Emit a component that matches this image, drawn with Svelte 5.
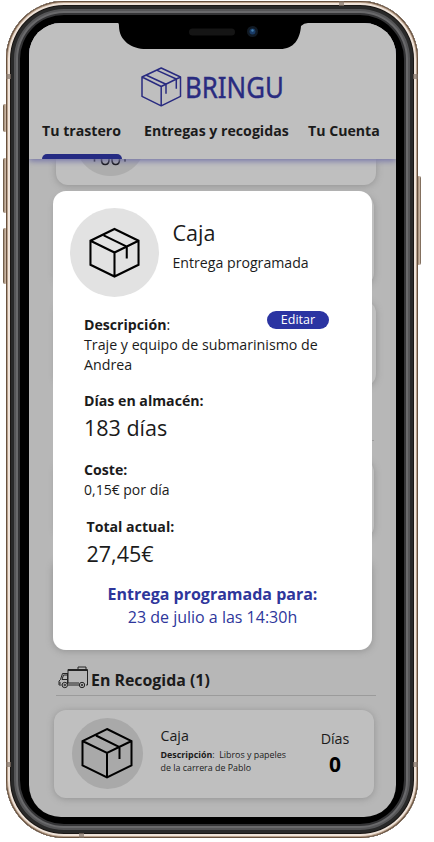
<script>
  const tabs = ['Tu trastero', 'Entregas y recogidas', 'Tu Cuenta'];
</script>

{#snippet box(size, stroke)}
  <svg width={size} height={size} viewBox="0 0 52 52" fill="none" stroke="currentColor" stroke-width={stroke}>
    <path d="M26 2 50.500 14V38.500L26 50.500 1.500 38.500V14ZM1.500 14 26 26 50.500 14M26 26V50.500M15 8.500 38.500 20V32" />
  </svg>
{/snippet}

<div class="phone">
  <i class="key mute"></i>
  <i class="key up"></i>
  <i class="key down"></i>
  <i class="key power"></i>
  <i class="band a"></i><i class="band b"></i><i class="band c"></i><i class="band d"></i><i class="band e"></i><i class="band f"></i>
  <div class="body">
    <div class="screen">
      <header>
        <div class="logo">
          <svg width="42" height="40" viewBox="0 0 42 40" fill="none" stroke="#292b80" stroke-width="1.5" stroke-linejoin="round">
            <path d="M20.200 1 39.500 10V29.300L20.200 38.800 1 29.300V10ZM1 10 20.200 19.500 39.500 10M20.200 19.500V38.800M4.900 8 25 17.300V26.700M15.600 3.100 35.300 12V21.700" />
          </svg>
          <span>BRINGU</span>
        </div>
        <nav>
          {#each tabs as tab, i}
            <a class="t{i}" class:active={i === 0}>{tab}</a>
          {/each}
        </nav>
      </header>
      <main>
        <div class="card first">
          <div class="peek">
            <svg width="34" height="7" viewBox="0 0 34 7" fill="none" stroke="#111" stroke-width="1.600"><path d="M1.500 0V2.500M32 0V2.500M8.500 0V1Q8.500 5.500 12.200 5.500T16 1V0M19 0V1Q19 5.500 22.700 5.500T26.500 1V0" /></svg>
          </div>
        </div>
        <div class="card second"></div>
        <div class="card third"></div>
        <div class="rule short"></div>
        <div class="card fourth"></div>
        <div class="card fifth"></div>
        <h2>
          <svg width="31" height="23" viewBox="0 0 31 23" fill="none" stroke="#242424" stroke-width="1">
            <path d="M10 17V3.500H29.500V19H28M22 19H10M10 4.500H29M20 3V1H28V3M9.500 7.500H4.500L2.500 13.500 1 15V19H3.500M9.500 9H5.500L4 13.500H9.500M9.500 7V18M1 17H3M10 17H21" />
            <circle cx="6.800" cy="19" r="2.700" /><circle cx="24" cy="19" r="2.700" />
            <circle cx="6.800" cy="19" r=".8" /><circle cx="24" cy="19" r=".8" />
          </svg>
          <span>En Recogida (1)</span>
        </h2>
        <div class="rule"></div>
        <article class="card item">
          <div class="circle small">{@render box(52, 2)}</div>
          <div class="info">
            <h3>Caja</h3>
            <p><b>Descripción</b>:&nbsp; Libros y papeles<br />de la carrera de Pablo</p>
          </div>
          <div class="days"><span>Días</span><b>0</b></div>
        </article>
      </main>
    </div>
  </div>
  <div class="notch">
    <svg width="190" height="28" viewBox="0 0 190 28">
      <path d="M0 0H190V1Q186 1 183 4C182 17 176 27 162 27H28C14 27 1 19 1 4Q1 1 0 1Z" fill="#000" />
      <rect x="74" y="6.500" width="46" height="7" rx="3.500" fill="#151515" />
      <circle cx="137.500" cy="9.500" r="5.500" fill="#111a24" /><circle cx="137.500" cy="9.500" r="3" fill="#193b66" /><circle cx="137.500" cy="8.500" r="1.200" fill="#427eae" />
    </svg>
  </div>

  <section class="modal">
    <div class="head">
      <div class="circle">{@render box(51, 2.1)}</div>
      <div class="title">
        <h1>Caja</h1>
        <p>Entrega programada</p>
      </div>
    </div>
    <div class="block desc">
      <div class="line"><span><b>Descripción</b>:</span><button>Editar</button></div>
      <p>Traje y equipo de submarinismo de<br />Andrea</p>
    </div>
    <div class="block">
      <b>Días en almacén:</b>
      <p class="big">183 días</p>
    </div>
    <div class="block cost">
      <b>Coste:</b>
      <p>0,15€ por día</p>
    </div>
    <div class="block total">
      <b>Total actual:</b>
      <p class="big">27,45€</p>
    </div>
    <footer>
      <b>Entrega programada para:</b>
      <p>23 de julio a las 14:30h</p>
    </footer>
  </section>
</div>

<style>
  :global(body) { background: #fff; }
  * { box-sizing: border-box; }
  h1, h2, h3, p { margin: 0; font-weight: 400; }
  svg { display: block; flex: none; }
  .phone {
    position: relative;
    width: 412px;
    height: 837px;
    margin-left: 6px;
    margin-top: 1px;
    font-family: "Open Sans", "Noto Sans", sans-serif;
    color: #1b1b1b;
    white-space: nowrap;
  }
  .body {
    position: relative;
    height: 100%;
    padding: 22px 22px 20px 22.5px;
    border-radius: 58px;
    background: #000;
    box-shadow: inset 0 0 0 1px #67513f, inset 0 0 0 2px #b9a18c, inset 0 0 0 4px #efe3d9, inset 0 0 0 5px #191614,
      inset 0 0 0 8px #292929, inset 0 0 0 10px #555557, inset 0 0 0 12px #69696b, inset 0 0 0 14px #343436;
  }
  .key { position: absolute; width: 4px; background: linear-gradient(90deg, #554330, #b19b86 40%, #cab5a3 65%, #5b4939); border-radius: 2px; }
  .mute { left: -3px; top: 103px; height: 28px; }
  .up { left: -3px; top: 157px; height: 55px; }
  .down { left: -3px; top: 227px; height: 56px; }
  .power { right: -3px; top: 175px; height: 89px; width: 4px; }
  .band { position: absolute; z-index: 2; width: 5px; height: 5px; background: #85756a; opacity: .7; }
  .a { left: 0; top: 73px; }
  .b { right: 0; top: 73px; }
  .c { left: 0; top: 761px; }
  .d { right: 0; top: 761px; }
  .e { left: 333px; top: 0; }
  .f { left: 73px; bottom: 0; }
  .screen { height: 794px; overflow: hidden; border-radius: 32px; background: #b7b7b7; }
  .notch { position: absolute; left: 112px; top: 21px; }
  .notch rect, .notch circle { transform: translateX(-3px); }
  header {
    position: relative;
    height: 136px;
    padding-top: 43px;
    background: #bfbfbf;
    box-shadow: 0 2px 6px #7474a8;
  }
  .logo { display: flex; margin-left: 112px; height: 41px; align-items: center; color: #292b80; }
  .logo span { font-family: "Noto Sans", sans-serif; font-size: 29px; line-height: 40px; transform: scaleX(.89); transform-origin: 0 50%; margin-left: 2.500px; -webkit-text-stroke: .4px #292b80; }
  nav { display: flex; margin: 12px 0 0 13.500px; height: 40px; }
  nav a { font-size: 14.150px; font-weight: 700; line-height: 23px; position: relative; }
  .t0 { width: 80px; }
  .t1 { margin-left: 22px; width: 146px; }
  .t2 { margin-left: 18px; }
  .active::after { content: ""; position: absolute; left: 0; bottom: 0; width: 80px; height: 5.500px; border-radius: 5px 5px 0 0; background: #252b83; }
  main { height: 658px; }
  .card { background: #bfbfbf; border-radius: 12px; box-shadow: 0 1px 7px #929292; }
  .first { width: 320px; height: 26px; margin-left: 27.500px; border-radius: 0 0 12px 12px; display: flex; overflow: visible; }
  .peek { width: 71px; height: 17px; margin-left: 18.500px; background: radial-gradient(circle at 35.500px -18.500px, #adadad 35px, transparent 36px); display: flex; justify-content: center; }
  .second { width: 319px; height: 90px; margin: 10px 0 0 26.500px; }
  .third { width: 320px; height: 85px; margin: 16px 0 0 27.500px; }
  .rule { width: 320px; height: 1px; margin-left: 27.500px; background: #9b9b9b; }
  .short { width: 318px; margin-top: 54px; }
  .fourth { width: 318px; height: 78px; margin: 19px 0 0 27.500px; }
  .fifth { width: 319px; height: 92px; margin: 20px 0 0 24px; }
  h2 { display: flex; height: 45px; padding: 15px 0 0 29px; font-size: 15.900px; font-weight: 700; }
  h2 svg { margin-top: 1px; }
  h2 span { margin-left: 2.500px; line-height: 31px; }
  .item { display: flex; width: 320px; height: 88px; margin: 14px 0 0 25.500px; }
  .circle { display: flex; align-items: center; justify-content: center; width: 89px; height: 89px; border-radius: 50%; background: #e2e2e2; color: #000; }
  .small { width: 71px; height: 71px; margin: 8px 0 0 17.500px; background: #a9a9a9; }
  .small svg { margin-top: -2px; }
  .info { width: 127px; margin: 14px 0 0 18px; }
  .info h3 { font-size: 14.200px; line-height: 24px; }
  .info p { margin-top: 1px; font-size: 8.880px; line-height: 12.500px; }
  .days { width: 60px; margin: 18px 0 0 17.500px; text-align: center; font-size: 14.300px; line-height: 22px; }
  .days span, .days b { display: block; }
  .days b { font-size: 21px; line-height: 28px; color: #000; }
  .modal { position: absolute; left: 47px; top: 190px; width: 319px; height: 459px; border-radius: 13px; background: #fff; padding: 17px 0 0 31px; font-size: 14px; line-height: 20px; }
  .modal b { display: block; }
  .head { display: flex; margin-left: -14px; }
  .title { margin-left: 13.500px; padding-top: 9px; }
  h1 { font-size: 21.500px; line-height: 32px; }
  .title p { margin-top: 4px; font-size: 14.150px; }
  .desc { margin-top: 18px; }
  .desc p { line-height: 19.500px; font-size: 14.220px; }
  .modal .line { display: flex; height: 20px; align-items: flex-end; }
  .modal .line b { display: inline; }
  .line span { width: 183px; }
  button { width: 62px; height: 18px; padding: 0; margin-bottom: 6px; border: 0; border-radius: 9px; background: #2b34a2; color: #fff; font: 12.500px/18px "Open Sans", sans-serif; }
  .block b { font-size: 14.150px; }
  .block + .block { margin-top: 17px; }
  .block .big { font-size: 21.500px; line-height: 33px; }
  .block + .cost { margin-top: 16px; }
  .block + .total { margin: 17px 0 0 2.500px; }
  footer { width: 257px; margin: 13px 0 0 0; text-align: center; color: #2e369b; font-size: 16px; line-height: 22.500px; }
</style>
